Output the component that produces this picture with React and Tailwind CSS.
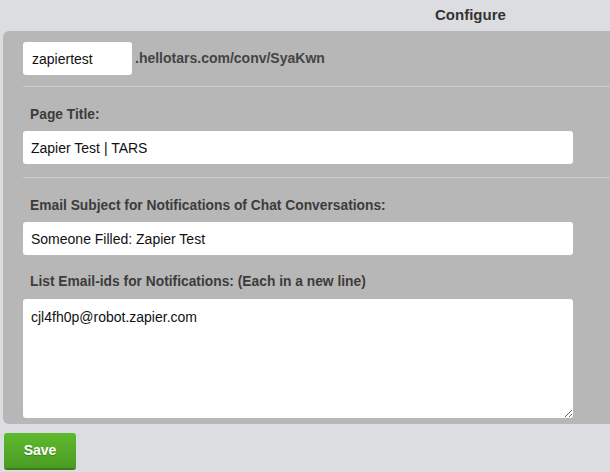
import React from 'react';

const font = { fontFamily: '"Liberation Sans", Arial, sans-serif' };

const Label = ({ children }) => (
  <div className="pl-[7px] text-[13.8px] leading-[16px] font-bold text-[#3c3c3c]">{children}</div>
);

const Field = ({ value }) => (
  <input
    readOnly
    value={value}
    className="w-[550px] h-[33px] bg-white rounded-[3px] px-2 text-[14px] text-[#111] outline-none"
  />
);

export default function App() {
  return (
    <div className="w-[610px] h-[472px] bg-[#dcdde0] overflow-hidden" style={font}>
      {/* Top bar */}
      <div className="h-[31px] pl-[435px] flex items-center">
        <span className="text-[15px] font-bold text-[#333]">Configure</span>
      </div>

      {/* Settings panel */}
      <div className="ml-[3px] w-[640px] bg-[#b7b7b7] rounded-l-[6px]">
        <div className="px-5 pt-[11px] pb-[11px] flex items-center gap-[3px]">
          <input
            readOnly
            value="zapiertest"
            className="w-[109px] h-[33px] bg-white rounded-[3px] px-[9px] text-[14px] text-[#111] outline-none"
          />
          <span className="text-[14px] font-bold text-[#444]">.hellotars.com/conv/SyaKwn</span>
        </div>

        <div className="ml-5 h-px bg-[#cbcbcb]" />

        <div className="px-5 pt-[20px] pb-[13px] flex flex-col gap-[8px]">
          <Label>Page Title:</Label>
          <Field value="Zapier Test | TARS" />
        </div>

        <div className="ml-5 h-px bg-[#cbcbcb]" />

        <div className="px-5 pt-[20px] pb-[6px] flex flex-col">
          <Label>Email Subject for Notifications of Chat Conversations:</Label>
          <div className="mt-[8px]">
            <Field value="Someone Filled: Zapier Test" />
          </div>
          <div className="mt-[19px]">
            <Label>List Email-ids for Notifications: (Each in a new line)</Label>
          </div>
          <textarea
            readOnly
            value="cjl4fh0p@robot.zapier.com"
            className="mt-[9px] w-[550px] h-[119px] bg-white rounded-[3px] px-2 pt-[8px] text-[14px] text-[#111] outline-none"
            style={font}
          />
        </div>
      </div>

      {/* Save */}
      <div className="pl-[4px] pt-[9px]">
        <button className="w-[72px] h-[37px] rounded-[3px] bg-gradient-to-b from-[#5fba2e] to-[#4a9c22] border-b-2 border-[#3b7d1a] text-white text-[14px] font-bold [text-shadow:0_1px_1px_rgba(0,0,0,0.25)]">
          Save
        </button>
      </div>
    </div>
  );
}
